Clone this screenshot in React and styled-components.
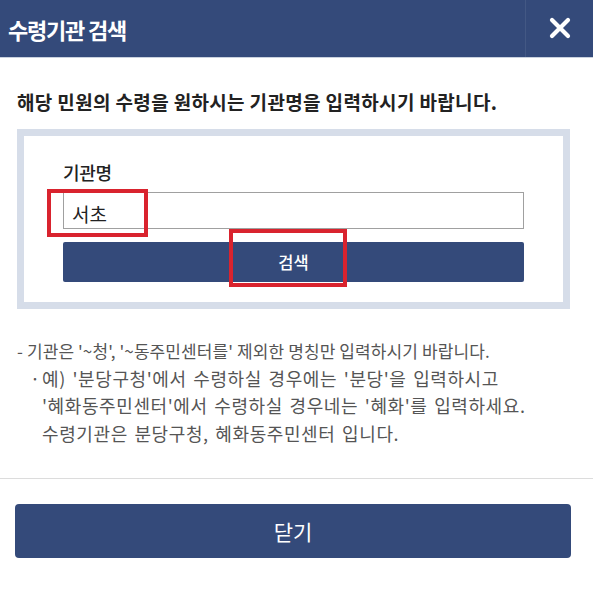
import React from "react";
import styled, { createGlobalStyle } from "styled-components";

const Global = createGlobalStyle`
  html, body { margin: 0; padding: 0; background: #fff; }
  body { font-family: "Noto Sans CJK KR", "Noto Sans", sans-serif; }
  * { box-sizing: border-box; }
`;

const NAVY = "#344a7a";

const Page = styled.div`
  width: 593px;
  height: 600px;
  background: #fff;
  display: flex;
  flex-direction: column;
`;

const Header = styled.header`
  height: 58px;
  background: ${NAVY};
  display: flex;
  align-items: stretch;
  border-bottom: 1px solid #c9d1de;
`;

const Title = styled.h1`
  flex: 1;
  margin: 0;
  padding-left: 8px;
  display: flex;
  align-items: center;
  color: #fff;
  font-size: 22px;
  font-weight: 700;
  letter-spacing: -1.2px;
`;

const CloseIcon = styled.button`
  width: 68px;
  border: 0;
  border-left: 1px solid rgba(255, 255, 255, 0.08);
  background: transparent;
  display: flex;
  align-items: center;
  justify-content: center;
  padding: 0 0 2px 0;
  cursor: pointer;
`;

const Body = styled.div`
  padding: 0 15px;
  display: flex;
  flex-direction: column;
`;

const Lead = styled.p`
  margin: 32px 0 0 2px;
  font-size: 19px;
  font-weight: 700;
  color: #222;
  letter-spacing: 0.35px;
  line-height: 24px;
`;

const SearchBox = styled.section`
  margin: 15px 8px 0 2px;
  border: 7px solid #d6dde9;
  padding: 25px 39px 20px 39px;
  display: flex;
  flex-direction: column;
`;

const Label = styled.label`
  font-size: 18px;
  font-weight: 500;
  color: #222;
  line-height: 22px;
  letter-spacing: -0.3px;
`;

const Field = styled.div`
  position: relative;
  margin-top: 9px;
`;

const Input = styled.input`
  width: 100%;
  height: 37px;
  border: 1px solid #a0a0a0;
  padding: 6px 8px 0 8px;
  font-family: "Noto Sans CJK KR", sans-serif;
  font-size: 19px;
  color: #222;
  outline: none;
`;

const Highlight = styled.span`
  position: absolute;
  border: 4px solid #d9232e;
  pointer-events: none;
`;

const SearchButton = styled.button`
  position: relative;
  margin-top: 13px;
  height: 40px;
  border: 0;
  border-radius: 2px;
  background: ${NAVY};
  color: #fff;
  font-family: "Noto Sans CJK KR", sans-serif;
  font-size: 16.5px;
  font-weight: 500;
`;

const Notes = styled.ul`
  list-style: none;
  margin: 28px 0 0 2px;
  padding: 0;
  color: #555;
  line-height: 27.5px;
`;

const Note = styled.li`
  padding-left: ${(p) => (p.$sub ? "25px" : "0")};
  font-size: ${(p) => (p.$sub ? "18px" : "17px")};
  letter-spacing: ${(p) => (p.$sub ? "0.6px" : "0.1px")};
  word-spacing: ${(p) => (p.$sub ? "2px" : "0")};
  position: relative;
  white-space: nowrap;
`;

const Bullet = styled.span`
  position: absolute;
  left: 13px;
`;

const Divider = styled.hr`
  margin: 31px 0 0 0;
  border: 0;
  border-top: 1px solid #dcdcdc;
`;

const Footer = styled.div`
  padding: 25px 22px 0 15px;
`;

const CloseButton = styled.button`
  width: 100%;
  height: 54px;
  border: 0;
  border-radius: 4px;
  background: ${NAVY};
  color: #fff;
  font-family: "Noto Sans CJK KR", sans-serif;
  font-size: 21px;
  font-weight: 400;
`;

export default function App() {
  return (
    <Page>
      <Global />
      <Header>
        <Title>수령기관 검색</Title>
        <CloseIcon aria-label="닫기">
          <svg width="22" height="22" viewBox="0 0 22 22">
            <path d="M3 3 L19 19 M19 3 L3 19" stroke="#fff" strokeWidth="4.2" strokeLinecap="round" />
          </svg>
        </CloseIcon>
      </Header>
      <Body>
        <Lead>해당 민원의 수령을 원하시는 기관명을 입력하시기 바랍니다.</Lead>
        <SearchBox>
          <Label>기관명</Label>
          <Field>
            <Input defaultValue="서초" />
            <Highlight style={{ left: -16, top: -3, width: 101, height: 48 }} />
          </Field>
          <SearchButton>
            검색
            <Highlight style={{ left: 166, top: -13, width: 118, height: 58 }} />
          </SearchButton>
        </SearchBox>
        <Notes>
          <Note>- 기관은 '~청', '~동주민센터를' 제외한 명칭만 입력하시기 바랍니다.</Note>
          <Note $sub>
            <Bullet>·</Bullet>예) '분당구청'에서 수령하실 경우에는 '분당'을 입력하시고
          </Note>
          <Note $sub>'혜화동주민센터'에서 수령하실 경우네는 '혜화'를 입력하세요.</Note>
          <Note $sub>수령기관은 분당구청, 혜화동주민센터 입니다.</Note>
        </Notes>
      </Body>
      <Divider />
      <Footer>
        <CloseButton>닫기</CloseButton>
      </Footer>
    </Page>
  );
}
